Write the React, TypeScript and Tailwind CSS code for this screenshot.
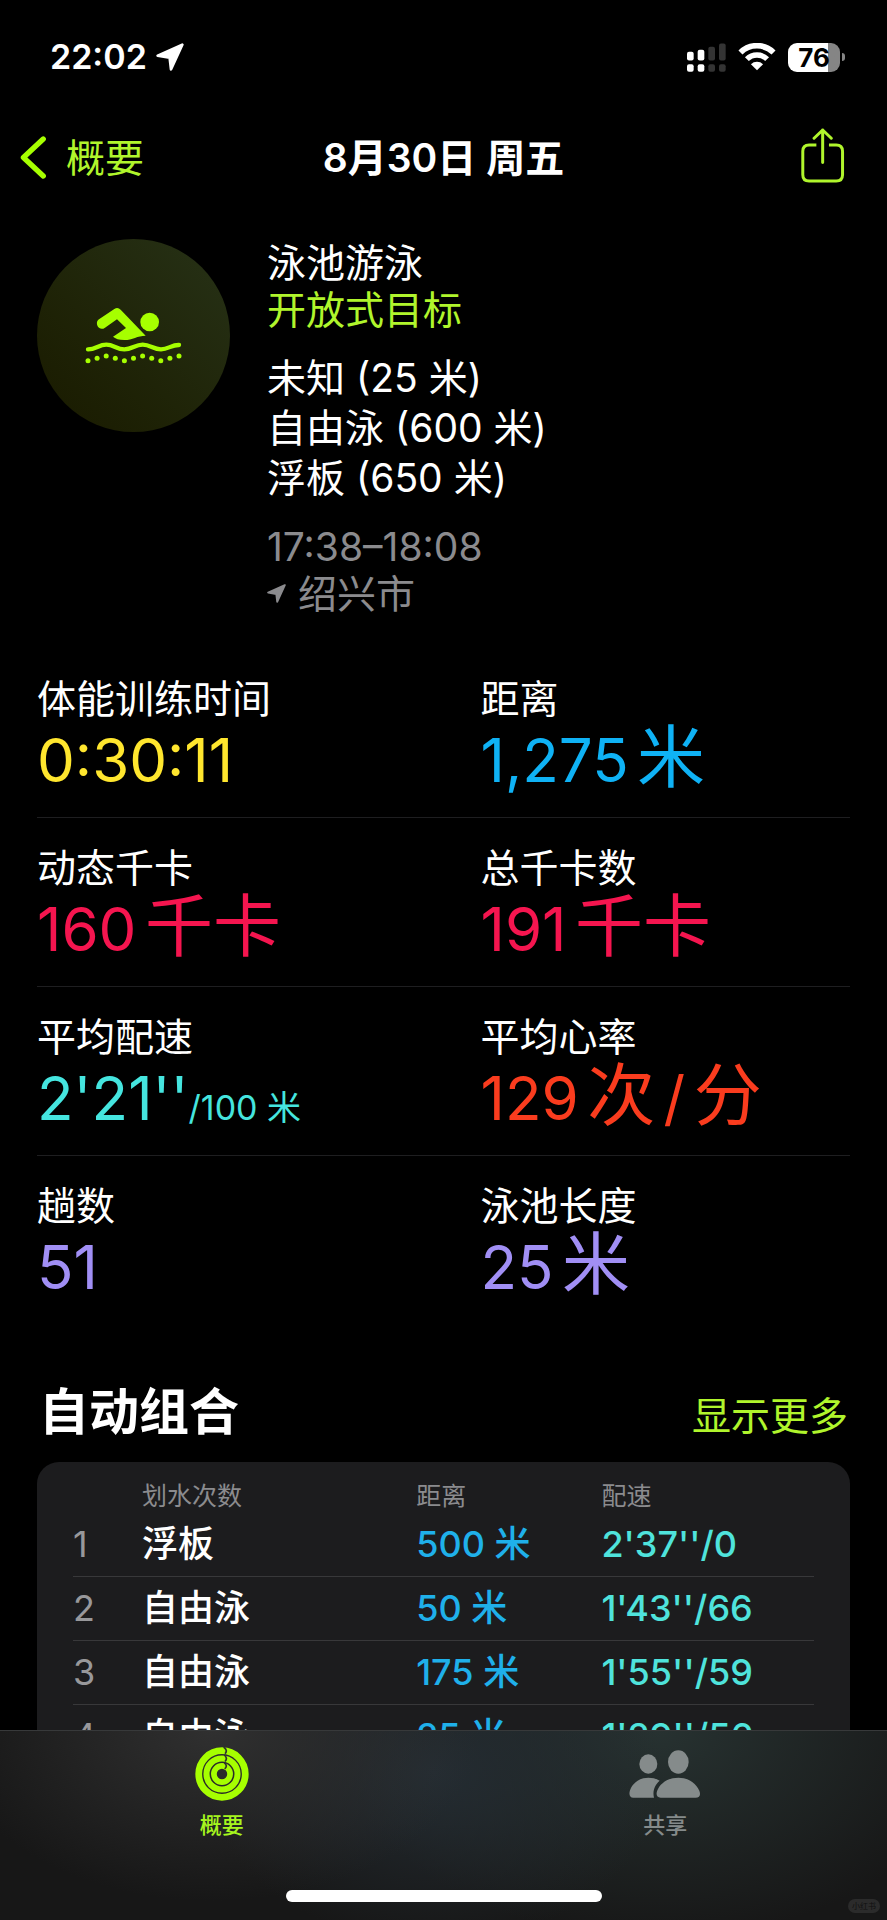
import { Fragment } from "react";

type Metric = {
  label: string;
  value: string;
  unit?: string[];
  suffix?: string;
  color: string;
};

const metrics: Metric[][] = [
  [
    { label: "体能训练时间", value: "0:30:11", color: "text-[#ffe62e]" },
    { label: "距离", value: "1,275", unit: ["米"], color: "text-[#0fb2f5]" },
  ],
  [
    { label: "动态千卡", value: "160", unit: ["千卡"], color: "text-[#f5154f]" },
    { label: "总千卡数", value: "191", unit: ["千卡"], color: "text-[#f5154f]" },
  ],
  [
    { label: "平均配速", value: "2'21''", suffix: "/100 米", color: "text-[#45e5df]" },
    { label: "平均心率", value: "129", unit: ["次", "/", "分"], color: "text-[#fa3c1e]" },
  ],
  [
    { label: "趟数", value: "51", color: "text-[#a18ff5]" },
    { label: "泳池长度", value: "25", unit: ["米"], color: "text-[#a18ff5]" },
  ],
];

const strokes = ["未知 (25 米)", "自由泳 (600 米)", "浮板 (650 米)"];

const sets = [
  { stroke: "浮板", distance: "500 米", pace: "2'37''/0" },
  { stroke: "自由泳", distance: "50 米", pace: "1'43''/66" },
  { stroke: "自由泳", distance: "175 米", pace: "1'55''/59" },
  { stroke: "自由泳", distance: "25 米", pace: "1'29''/56" },
];

function LocationArrow({ className }: { className: string }) {
  return (
    <svg viewBox="0 0 82 82" className={className} fill="currentColor" stroke="currentColor" strokeWidth="8" strokeLinejoin="round">
      <path d="M77 5 L5 37 L40 43 L44 77 Z" />
    </svg>
  );
}

function StatusBar() {
  return (
    <div className="flex h-[114px] shrink-0 items-center justify-between pl-[50px] pr-[42px]">
      <div className="flex items-center gap-[9px]">
        <span className="text-[34px] leading-[40px] font-semibold">22:02</span>
        <LocationArrow className="size-[28px]" />
      </div>
      <div className="flex items-center gap-3">
        <svg viewBox="0 0 117 86" className="h-[29px] w-[39px]">
          <g fill="#fff">
            <rect x="0" y="26" width="20" height="26" rx="6" />
            <rect x="0" y="63" width="20" height="23" rx="6" />
            <rect x="32" y="20" width="20" height="32" rx="6" />
            <rect x="32" y="63" width="20" height="23" rx="6" />
          </g>
          <g fill="#343434">
            <rect x="64" y="11" width="20" height="41" rx="6" />
            <rect x="64" y="63" width="20" height="23" rx="6" />
            <rect x="96" y="1" width="20" height="51" rx="6" />
            <rect x="96" y="63" width="20" height="23" rx="6" />
          </g>
        </svg>
        <svg viewBox="0 0 112 86" className="h-[29px] w-[38px]" fill="none" stroke="#fff">
          <path d="M7 28 A70 70 0 0 1 105 28" strokeWidth="17" />
          <path d="M26 48 A42 42 0 0 1 86 48" strokeWidth="16" />
          <path d="M56 81 L38 63 A26 26 0 0 1 74 63 Z" fill="#fff" stroke="none" />
        </svg>
        <div className="flex items-center gap-[2px]">
          <div className="flex h-[29px] w-[52px] items-center justify-center rounded-[9px] bg-linear-to-r from-white from-77% to-[#858585] to-77%">
            <span className="text-[26px] leading-[29px] font-bold text-black">76</span>
          </div>
          <div className="h-[8px] w-[3px] rounded-r-full bg-[#858585]" />
        </div>
      </div>
    </div>
  );
}

function NavBar() {
  return (
    <header className="grid h-[86px] shrink-0 grid-cols-[1fr_auto_1fr] items-center px-[20px]">
      <a href="#summary" className="flex items-center gap-[20px] text-[39px] leading-[47px] text-[#b0f52c]">
        <svg viewBox="0 0 78 130" className="h-[43px] w-[26px]" fill="none" stroke="#a6ff00" strokeWidth="16" strokeLinecap="round" strokeLinejoin="round">
          <path d="M70 9 L10 65 L70 121" />
        </svg>
        概要
      </a>
      <h1 className="text-[39px] leading-[47px] font-semibold">8月30日 周五</h1>
      <button aria-label="共享体能训练" className="mr-[22px] mb-1 justify-self-end">
        <svg viewBox="0 0 132 166" className="h-[55px] w-[44px]" fill="none" stroke="#b0f52c" strokeWidth="9" strokeLinecap="round" strokeLinejoin="round">
          <path d="M46 51 H24 Q5 51 5 70 V141 Q5 160 24 160 H106 Q125 160 125 141 V70 Q125 51 106 51 H84" strokeLinecap="butt" />
          <path d="M65 104 V6 M39 31 L65 6 L91 31" />
        </svg>
      </button>
    </header>
  );
}

function SwimIcon() {
  const dots = [416, 409, 402, 409, 416, 409, 402, 409, 416, 409, 402];
  return (
    <svg viewBox="195 255 291 171" className="h-[57px] w-[97px]" fill="#a6ff00">
      <circle cx="389" cy="300" r="28" />
      <path d="M283 261 Q293 254 302 263 L377 341 C352 341 338 354 313 354 C297 354 286 350 279 344 L318 318 L291 292 L255 317 C247 323 237 321 233 313 C229 305 230 297 237 292 Z" />
      <path
        d="M204 382 C228 382 236 368 259 368 C281 368 290 382 313 382 C336 382 345 368 368 368 C391 368 400 382 423 382 C445 382 455 368 477 369"
        fill="none"
        stroke="#a6ff00"
        strokeWidth="13"
        strokeLinecap="round"
      />
      {dots.map((y, i) => (
        <circle key={i} cx={204 + i * 27.3} cy={y} r="7.5" />
      ))}
    </svg>
  );
}

function WorkoutHeader() {
  return (
    <section className="flex gap-[37px] pt-[39px]">
      <div className="flex size-[193px] shrink-0 items-center justify-center rounded-full bg-linear-to-tr from-[#191a00] to-[#273217]">
        <SwimIcon />
      </div>
      <div className="text-[39px] leading-[47px]">
        <p>泳池游泳</p>
        <p className="text-[#b0f52c]">开放式目标</p>
        <ul className="pt-5 pb-5 leading-[50px]">
          {strokes.map((stroke) => (
            <li key={stroke}>{stroke}</li>
          ))}
        </ul>
        <div className="text-[#8b8b8e]">
          <p>17:38–18:08</p>
          <p className="flex items-center gap-[12px]">
            <LocationArrow className="size-[19px]" />
            绍兴市
          </p>
        </div>
      </div>
    </section>
  );
}

function MetricCell({ label, value, unit = [], suffix, color }: Metric) {
  return (
    <div>
      <dt className="text-[39px] leading-[48px]">{label}</dt>
      <dd className={`text-[68px] leading-[68px] whitespace-nowrap ${color}`}>
        <span className="text-[60px] leading-none">{value}</span>
        {unit.map((part) => (
          <Fragment key={part}>
            <span className="text-[30px] leading-none whitespace-pre"> </span>
            <span className={part === "/" ? "text-[60px] leading-none" : "leading-none"}>{part}</span>
          </Fragment>
        ))}
        {suffix && <span className="text-[34px] leading-none">{suffix}</span>}
      </dd>
    </div>
  );
}

function AutoSets() {
  return (
    <section className="pt-[58px]">
      <div className="flex items-baseline justify-between px-[2px] pb-4">
        <h2 className="text-[50px] leading-[60px] font-bold">自动组合</h2>
        <a href="#sets" className="text-[39px] leading-[60px] text-[#b0f52c]">
          显示更多
        </a>
      </div>
      <div className="rounded-[22px] bg-[#1c1c1e] px-[36px] pt-[18px]">
        <table className="w-full table-fixed text-left">
          <thead>
            <tr className="h-8 text-[25px] leading-8 text-[#8b8b8e]">
              <th className="w-[69px]" />
              <th className="w-[37%] font-normal">划水次数</th>
              <th className="w-1/4 font-normal">距离</th>
              <th className="font-normal">配速</th>
            </tr>
          </thead>
          <tbody>
            {sets.map((set, i) => (
              <tr key={i} className="h-[64px] border-b border-[#38383a] text-[36px] leading-[44px] font-medium">
                <td className="font-normal text-[#98989b]">{i + 1}</td>
                <td>{set.stroke}</td>
                <td className="text-[#1fb0ea]">{set.distance}</td>
                <td className="text-[#4fe3dc]">{set.pace}</td>
              </tr>
            ))}
          </tbody>
        </table>
      </div>
    </section>
  );
}

function TabBar() {
  return (
    <nav className="relative shrink-0 border-t border-[#37393a] bg-[#171717] bg-[radial-gradient(ellipse_30%_90%_at_24%_0%,#303030,transparent),radial-gradient(ellipse_26%_90%_at_49%_22%,#242c32,transparent),radial-gradient(ellipse_36%_110%_at_74%_0%,#273231,transparent)]">
      <div className="grid h-[159px] grid-cols-2 text-[22px] leading-[28px] font-medium">
        <a href="#summary" className="flex flex-col items-center pt-4 text-[#a6f51e]">
          <svg viewBox="-80 -80 160 160" className="size-[54px]" fill="none" stroke="#a6ff00">
            <circle r="69" strokeWidth="20" />
            <circle r="46" strokeWidth="18" />
            <circle r="24" strokeWidth="17" />
            <path d="M5 -80 Q18 -70 9 -60 M7 -57 Q18 -47 9 -37 M7 -34 Q18 -24 8 -15" stroke="#303030" strokeWidth="5" />
          </svg>
          <span className="pt-[10px]">概要</span>
        </a>
        <a href="#sharing" className="flex flex-col items-center pt-4 text-[#858b8b]">
          <svg viewBox="557 140 216 160" className="h-[54px] w-[72px]" fill="currentColor">
            <ellipse cx="615" cy="190" rx="27" ry="29" />
            <ellipse cx="705" cy="184" rx="31" ry="35" />
            <path d="M570 291 C559 291 556 281 560 269 C568 246 590 231 615 231 Q635 231 649 240 C634 252 627 272 632 291 Z" />
            <path d="M652 291 C638 291 637 278 644 265 C655 243 680 231 705 231 C733 231 757 246 768 270 C773 283 769 291 757 291 Z" />
          </svg>
          <span className="pt-[10px]">共享</span>
        </a>
      </div>
      <div className="flex h-[30px] justify-center">
        <div className="h-3 w-[316px] rounded-full bg-white" />
      </div>
      <span className="absolute right-[7px] bottom-[7px] rounded-full bg-[#2b2b2b] px-1 text-[8px] leading-[14px] text-[#101010]">小红书</span>
    </nav>
  );
}

export default function App() {
  return (
    <div className="flex h-screen flex-col bg-black font-['Inter','Noto_Sans_CJK_SC',sans-serif] text-white">
      <StatusBar />
      <NavBar />
      <main className="min-h-0 flex-1 overflow-y-auto px-[37px] [scrollbar-width:none]">
        <WorkoutHeader />
        <div className="pt-[32px]">
          {metrics.map((row, i) => (
            <dl key={i} className="grid grid-cols-2 gap-x-[74px] border-b border-[#1e1e20] pt-[26px] pb-[26px] last:border-b-0">
              {row.map((metric) => (
                <MetricCell key={metric.label} {...metric} />
              ))}
            </dl>
          ))}
        </div>
        <AutoSets />
      </main>
      <TabBar />
    </div>
  );
}
